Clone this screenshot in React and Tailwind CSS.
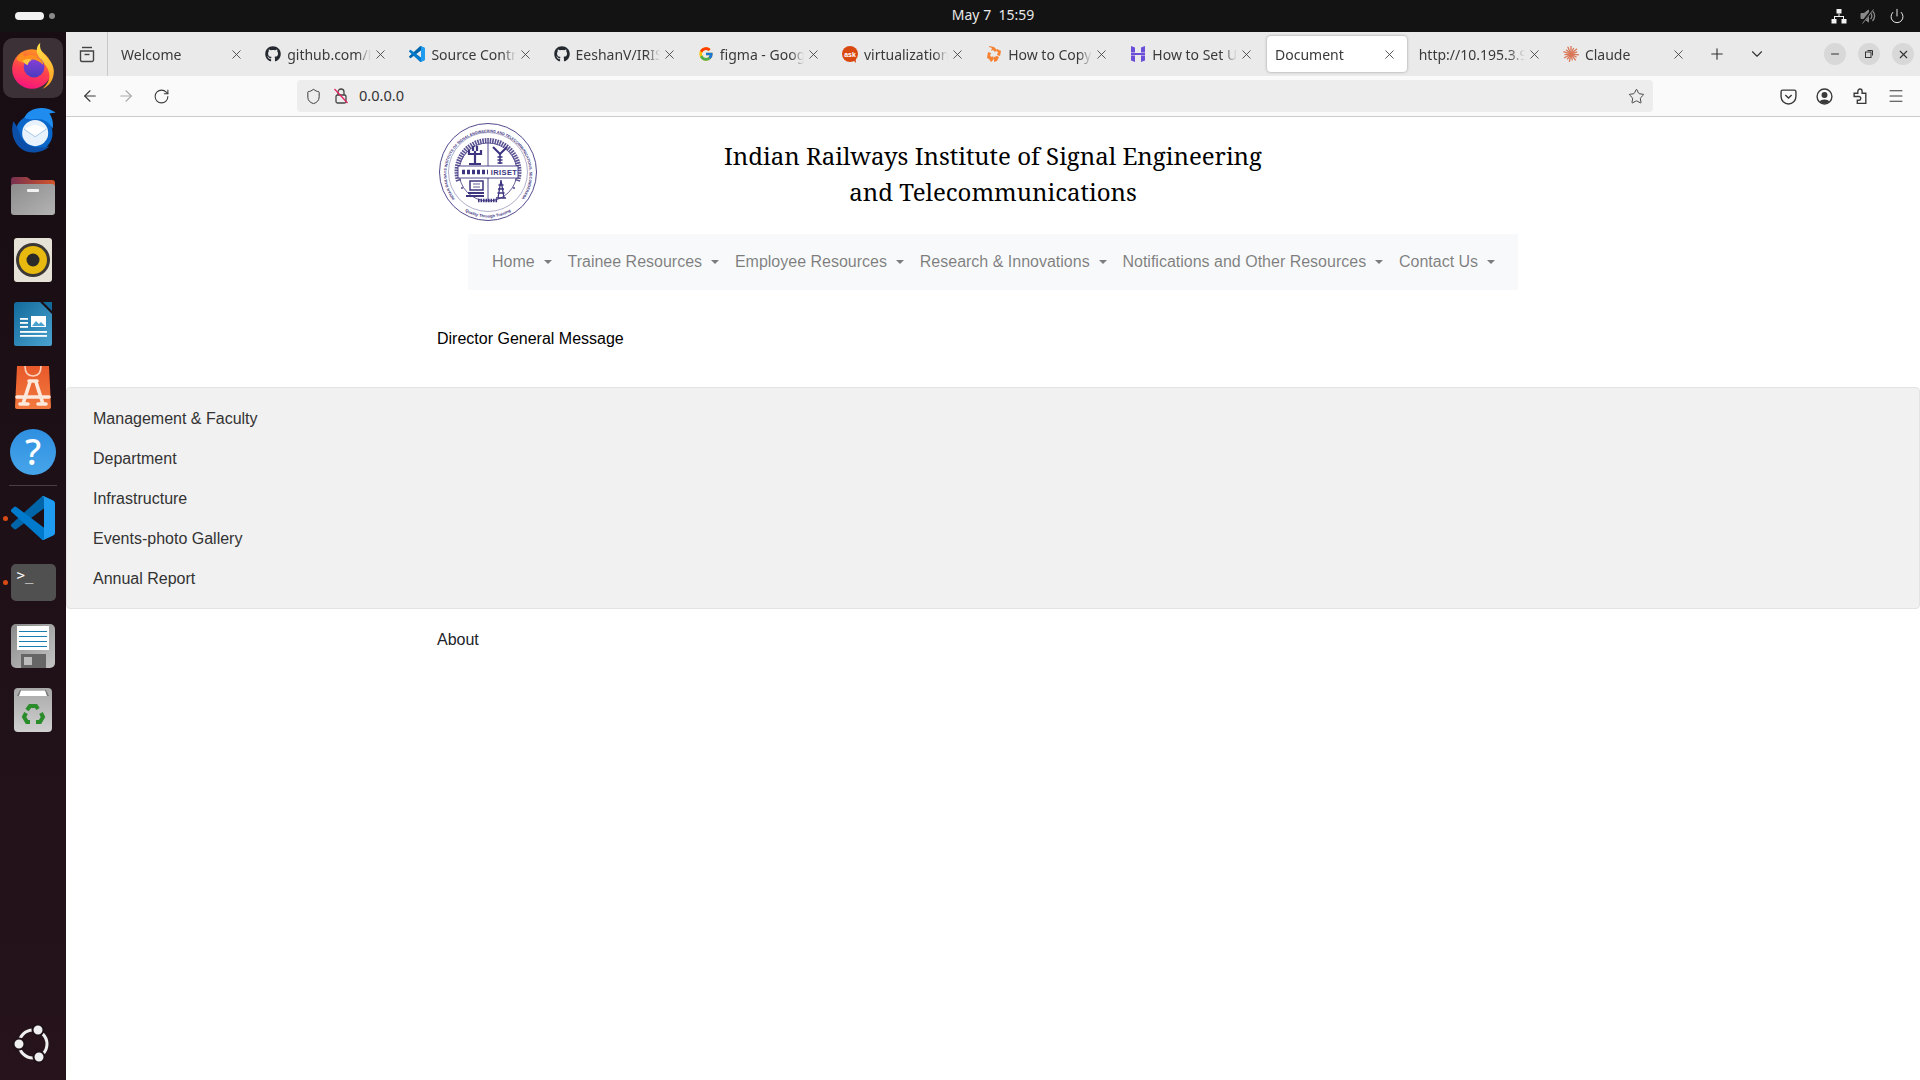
import { FaGithub } from 'react-icons/fa'
import { FcGoogle } from 'react-icons/fc'
import { ArrowLeft, ArrowRight, RotateCw, Shield, Star, Menu, X, Plus, ChevronDown, Minus, Power } from 'lucide-react'

const VS_PATHS = [
  ['#0065a9', 'M96.5 10.8 75.9.9a6.2 6.2 0 0 0-7.1 1.2L1.4 63.6a4.2 4.2 0 0 0 0 6.2l5.5 5a4.2 4.2 0 0 0 5.3.2L93.4 14.4a4.1 4.1 0 0 1 6.6 3.3v-.2a6.2 6.2 0 0 0-3.5-5.6z'],
  ['#007acc', 'M96.5 89.2 75.9 99.1a6.2 6.2 0 0 1-7.1-1.2L1.4 36.4a4.2 4.2 0 0 1 0-6.2l5.5-5a4.2 4.2 0 0 1 5.3-.2L93.4 85.6a4.1 4.1 0 0 0 6.6-3.3v.2a6.2 6.2 0 0 1-3.5 5.6z'],
  ['#1f9cf0', 'M75.9 99.1a6.2 6.2 0 0 1-7.1-1.2c2.3 2.3 6.2.7 6.2-2.6V4.7c0-3.3-3.9-4.9-6.2-2.6a6.2 6.2 0 0 1 7.1-1.2l20.6 9.9a6.2 6.2 0 0 1 3.5 5.6v67.2a6.2 6.2 0 0 1-3.5 5.6z'],
]

function VsCode({ size }) {
  return (
    <svg width={size} height={size} viewBox="0 0 100 100">
      {VS_PATHS.map(([fill, d]) => <path key={fill} fill={fill} d={d} />)}
    </svg>
  )
}

function AskIcon() {
  return (
    <svg width="16" height="17" viewBox="0 0 16 17">
      <circle cx="8" cy="8" r="8" fill="#d9480f" />
      <path d="M11 14l3 3-.5-5z" fill="#d9480f" />
      <text x="8" y="10.5" textAnchor="middle" fontSize="7" fontWeight="700" fill="#fff" fontFamily="Liberation Sans, sans-serif">ask</text>
    </svg>
  )
}

function CopyIcon() {
  return (
    <svg width="16" height="18" viewBox="0 0 16 18" fill="#f58233">
      <path d="M3 1l5 1 3 3-2 2-2-2-2 1 1-3-3-1z" />
      <path d="M11 4l4 2-1 5-3-1 1-3-2-1z" />
      <path d="M2 7l3 1-1 3 2 1 1-1 1 3-3 3-2-3-2-1z" />
      <path d="M8 12l3-1 2 1-2 4-3 1z" />
    </svg>
  )
}

function HostIcon() {
  return (
    <svg width="16" height="18" viewBox="0 0 16 18" fill="#6c4fd8">
      <path d="M1 1l4 1.5v5H1zM11 2.500L15 1v6.500h-4zM1 8h14v2H1zM1 10.500h4V17l-4-1.500zM11 10.500h4v5L11 17z" />
    </svg>
  )
}

function ClaudeIcon() {
  const rays = [0, 24, 48, 72, 96, 120, 144, 168, 192, 216, 240, 264, 288, 312, 336]
  return (
    <svg width="16" height="16" viewBox="0 0 16 16">
      {rays.map((r) => (
        <line key={r} x1="8" y1="8" x2="8" y2={r % 48 === 0 ? 0 : 1.5} stroke="#d97757" strokeWidth="1.3" transform={`rotate(${r} 8 8)`} />
      ))}
    </svg>
  )
}

const TABS = [
  { title: 'Welcome' },
  { title: 'github.com/EeshanV', icon: <FaGithub size={16} color="#24292f" /> },
  { title: 'Source Control', icon: <VsCode size={16} /> },
  { title: 'EeshanV/IRISET', icon: <FaGithub size={16} color="#24292f" /> },
  { title: 'figma - Google', icon: <FcGoogle size={16} /> },
  { title: 'virtualization', icon: <AskIcon /> },
  { title: 'How to Copy', icon: <CopyIcon /> },
  { title: 'How to Set Up', icon: <HostIcon /> },
  { title: 'Document', active: true },
  { title: 'http://10.195.3.9' },
  { title: 'Claude', icon: <ClaudeIcon /> },
]

const NAV_ITEMS = [
  'Home',
  'Trainee Resources',
  'Employee Resources',
  'Research & Innovations',
  'Notifications and Other Resources',
  'Contact Us',
]

const PANEL_ITEMS = ['Management & Faculty', 'Department', 'Infrastructure', 'Events-photo Gallery', 'Annual Report']

function Firefox() {
  return (
    <svg width="50" height="50" viewBox="0 2 48 48">
      <defs>
        <linearGradient id="ffBody" x1="0.7" y1="0" x2="0.4" y2="1">
          <stop offset="0" stopColor="#ff9a1f" />
          <stop offset="0.55" stopColor="#ff3f4e" />
          <stop offset="1" stopColor="#f5157f" />
        </linearGradient>
        <linearGradient id="ffFlame" x1="0.5" y1="0" x2="0.5" y2="1">
          <stop offset="0" stopColor="#ffe14a" />
          <stop offset="1" stopColor="#ff9a1f" />
        </linearGradient>
        <linearGradient id="ffCore" x1="0.5" y1="0" x2="0.5" y2="1">
          <stop offset="0" stopColor="#8f3fd6" />
          <stop offset="1" stopColor="#4a3bc0" />
        </linearGradient>
      </defs>
      <circle cx="23" cy="27" r="19" fill="url(#ffBody)" />
      <path d="M31 2c-1 5 1 8 5 12 5 5 8 10 8 15 0 8-4 14-11 17 6-5 8-11 6-17-2-7-9-11-11-17-1-4 0-8 3-10z" fill="url(#ffFlame)" />
      <circle cx="25" cy="25" r="10" fill="url(#ffCore)" />
      <path d="M8 17c2-4 5-6 7-6-1 2 0 3 1 4 4-2 9-2 13 1 3 2 5 4 5 7-4-4-9-6-13-5-2 1-3 2-3 3-3 0-8-1-10-4z" fill="#ff8f1f" />
      <path d="M14 19c3-2 7-2 9-1-2 1-4 3-4 5-2 0-4-2-5-4z" fill="#ffc53d" />
    </svg>
  )
}

function Thunderbird() {
  return (
    <svg width="50" height="50" viewBox="1 4 46 46">
      <circle cx="25" cy="28" r="17" fill="#0a66c8" />
      <path d="M6 17c-3 10 0 23 12 28 8 2 16 0 21-5-9 3-21 1-26-8-2-5-3-10-7-15z" fill="#0b4fa8" />
      <path d="M16 14c3-7 12-11 23-8l6 3-6 1c3 4 4 9 3 14-3-6-8-9-14-9-5 0-9 1-12-1z" fill="#1f8df0" />
      <circle cx="26" cy="28" r="12" fill="#e8f2fc" />
      <path d="M16 24l10 7 10-7" fill="none" stroke="#a8c8ea" strokeWidth="1.500" />
      <path d="M16 24l10-4 10 4-10 7z" fill="#ffffff" />
    </svg>
  )
}

function Files() {
  return (
    <svg width="46" height="46" viewBox="0 0 46 46">
      <defs>
        <linearGradient id="filesTab" x1="0" y1="0" x2="1" y2="0">
          <stop offset="0" stopColor="#77304f" />
          <stop offset="1" stopColor="#d4562a" />
        </linearGradient>
        <linearGradient id="filesBody" x1="0" y1="0" x2="1" y2="1">
          <stop offset="0" stopColor="#8c8c8c" />
          <stop offset="1" stopColor="#b4b4b4" />
        </linearGradient>
      </defs>
      <path d="M1 7a3 3 0 0 1 3-3h13l4 3h21a3 3 0 0 1 3 3v10H1z" fill="url(#filesTab)" />
      <rect x="1" y="11" width="44" height="31" rx="3" fill="url(#filesBody)" />
      <rect x="17" y="16" width="12" height="3" rx="1" fill="#f2f2f2" />
    </svg>
  )
}

function Rhythmbox() {
  return (
    <svg width="46" height="46" viewBox="0 0 46 46">
      <rect x="4" y="1" width="38" height="44" rx="3" fill="#e6e2d8" />
      <circle cx="23" cy="23" r="17" fill="#3b3836" />
      <circle cx="23" cy="23" r="14" fill="#e8b90f" />
      <circle cx="23" cy="23" r="6.500" fill="#2b2a28" />
    </svg>
  )
}

function Writer() {
  return (
    <svg width="46" height="46" viewBox="0 0 46 46">
      <defs>
        <linearGradient id="writerBody" x1="0" y1="0" x2="1" y2="1">
          <stop offset="0" stopColor="#126a9c" />
          <stop offset="1" stopColor="#4aa3cf" />
        </linearGradient>
      </defs>
      <path d="M7 1h23l12 12v30a2 2 0 0 1-2 2H6a2 2 0 0 1-2-2V4a3 3 0 0 1 3-3z" fill="url(#writerBody)" />
      <path d="M33 1h9v9z" fill="#126a9c" />
      <rect x="10" y="17" width="8" height="1.800" fill="#fff" />
      <rect x="10" y="21" width="8" height="1.800" fill="#fff" />
      <rect x="10" y="25" width="8" height="1.800" fill="#fff" />
      <rect x="21" y="15" width="15" height="11" fill="#fff" />
      <path d="M22 25l4-5 3 3 2-2 4 4z" fill="#4aa3cf" />
      <rect x="10" y="30" width="27" height="1.800" fill="#fff" />
      <rect x="10" y="34" width="27" height="1.800" fill="#fff" />
    </svg>
  )
}

function AppCenter() {
  return (
    <svg width="46" height="46" viewBox="0 0 46 46">
      <defs>
        <linearGradient id="appBody" x1="0" y1="0" x2="0" y2="1">
          <stop offset="0" stopColor="#e8592a" />
          <stop offset="1" stopColor="#f2793f" />
        </linearGradient>
      </defs>
      <path d="M7 1h32l2 41a2 2 0 0 1-2 2H7a2 2 0 0 1-2-2z" fill="url(#appBody)" />
      <path d="M15 1c0 8 4 10 8 10s8-2 8-10" fill="none" stroke="#fbd3bd" strokeWidth="1.600" />
      <path d="M19 16h8M20 17l-7 22M26 17l7 22M7 32h32M10 39h8M28 39h8" fill="none" stroke="#fde8dc" strokeWidth="3.600" strokeLinecap="round" />
    </svg>
  )
}

function Save() {
  return (
    <svg width="46" height="46" viewBox="0 0 46 46">
      <defs>
        <linearGradient id="saveBody" x1="0" y1="0" x2="1" y2="1">
          <stop offset="0" stopColor="#8a8a8a" />
          <stop offset="1" stopColor="#c4c4c4" />
        </linearGradient>
      </defs>
      <rect x="1" y="1" width="44" height="44" rx="5" fill="url(#saveBody)" />
      <rect x="7" y="3" width="32" height="24" fill="#fff" />
      <rect x="9" y="8" width="28" height="1" fill="#1a7fb0" />
      <rect x="9" y="13" width="28" height="1" fill="#1a7fb0" />
      <rect x="9" y="18" width="28" height="1" fill="#1a7fb0" />
      <rect x="9" y="23" width="28" height="1" fill="#1a7fb0" />
      <rect x="11" y="31" width="25" height="14" fill="#666" />
      <rect x="14" y="34" width="8" height="8" fill="#bdbdbd" />
    </svg>
  )
}

function Trash() {
  return (
    <svg width="46" height="46" viewBox="0 0 46 46">
      <defs>
        <linearGradient id="trashBody" x1="0" y1="0" x2="0" y2="1">
          <stop offset="0" stopColor="#a8a8a8" />
          <stop offset="1" stopColor="#d0d0d0" />
        </linearGradient>
      </defs>
      <rect x="4" y="1" width="38" height="44" rx="4" fill="url(#trashBody)" />
      <path d="M10 3h26l3 6H7z" fill="#777" />
      <path d="M11 3.500h24l2 5.500H9z" fill="#fff" />
      <g fill="none" stroke="#2a8c2a" strokeWidth="4">
        <path d="M17 23l3-4h6l2 3" />
        <path d="M31 26l2 4-3 5h-4" />
        <path d="M20 35h-3l-3-5 2-4" />
      </g>
    </svg>
  )
}

function Ubuntu() {
  return (
    <svg width="44" height="44" viewBox="0 0 44 44">
      <circle cx="22" cy="22" r="14" fill="none" stroke="#f0f0f0" strokeWidth="3" />
      <circle cx="27" cy="8" r="5.500" fill="#f0f0f0" stroke="#1f1118" strokeWidth="2" />
      <circle cx="8" cy="22" r="5.500" fill="#f0f0f0" stroke="#1f1118" strokeWidth="2" />
      <circle cx="28" cy="35" r="5.500" fill="#f0f0f0" stroke="#1f1118" strokeWidth="2" />
    </svg>
  )
}

function Help() {
  return (
    <div className="w-[46px] h-[46px] rounded-full bg-gradient-to-b from-[#2f8fe0] to-[#47a5ea] flex items-center justify-center text-white text-[36px] font-medium leading-none font-['Noto_Sans',sans-serif]">
      ?
    </div>
  )
}

function Terminal() {
  return (
    <div className="w-[45px] h-[37px] rounded-[5px] bg-[#505050] text-white text-[14px] leading-none pl-[6px] pt-[4px] font-['DejaVu_Sans_Mono',monospace]">
      &gt;_
    </div>
  )
}

function Logo() {
  const blue = '#3d3580'
  return (
    <svg width="100" height="100" viewBox="0 0 100 100" className="shrink-0">
      <defs>
        <path id="topRing" d="M17 77A41.500 41.500 0 1 1 83 77" />
        <path id="bottomRing" d="M22 86A46 46 0 0 0 78 86" />
      </defs>
      <circle cx="50" cy="50" r="48.500" fill="none" stroke={blue} strokeWidth="0.900" />
      <circle cx="50" cy="50" r="39.500" fill="none" stroke={blue} strokeWidth="0.400" />
      <circle cx="50" cy="50" r="29" fill="none" stroke={blue} strokeWidth="0.800" />
      <text fontSize="3.800" fill={blue} fontFamily="Liberation Sans, sans-serif" fontWeight="700">
        <textPath href="#topRing" textLength="186" lengthAdjust="spacingAndGlyphs">INDIAN RAILWAYS INSTITUTE OF SIGNAL ENGINEERING AND TELECOMMUNICATIONS, SECUNDERABAD</textPath>
      </text>
      <text fontSize="4" fill={blue} fontFamily="Liberation Sans, sans-serif" fontWeight="700">
        <textPath href="#bottomRing" startOffset="50%" textAnchor="middle">Quality Through Training</textPath>
      </text>
      {/* the hindi ring reads as dense marks at this size */}
      <path d="M20.500 59A31 31 0 1 1 79.500 59" fill="none" stroke={blue} strokeWidth="5" strokeDasharray="1.600 0.900" opacity="0.85" />
      <path d="M40 78.500h20" stroke={blue} strokeWidth="3.500" strokeDasharray="1.600 0.900" />
      <circle cx="24" cy="66" r="0.900" fill={blue} />
      <circle cx="76" cy="66" r="0.900" fill={blue} />
      <path d="M50 21v23M50 56v23" stroke={blue} strokeWidth="0.900" />
      <rect x="20" y="44" width="60" height="12" fill="#fff" stroke={blue} strokeWidth="0.900" />
      <path d="M24 50h26" stroke={blue} strokeWidth="4.500" strokeDasharray="3 2" />
      <text x="66" y="52.800" textAnchor="middle" fontSize="7.500" fontWeight="700" letterSpacing="0.400" fill={blue} fontFamily="Liberation Sans, sans-serif">IRISET</text>
      <path d="M37 29v13M31 42h12M31 28v4h12v-4M35 24v5M39 24v5" fill="none" stroke={blue} strokeWidth="2.200" />
      <path d="M55 25l7 7 7-7" fill="none" stroke={blue} strokeWidth="2" />
      <path d="M62 32v10M59.500 35h5M59.500 38h5M59.500 41h5" fill="none" stroke={blue} strokeWidth="1.500" />
      <rect x="32" y="59" width="13" height="9" fill="none" stroke={blue} strokeWidth="1.500" />
      <path d="M35 62h7M35 65h7" stroke={blue} strokeWidth="0.800" />
      <path d="M30 71h16M28 74h18" stroke={blue} strokeWidth="1.800" />
      <path d="M63 58l-3 18M63 58l3 18M60.500 63h5M60 67h6M59.500 71h7M58 76h10" fill="none" stroke={blue} strokeWidth="1.300" />
    </svg>
  )
}

function DockItem({ children, running, active }) {
  return (
    <div className="relative h-[64px] w-full flex items-center justify-center">
      {running && <span className="absolute left-[3px] top-[30px] w-[5px] h-[5px] rounded-full bg-[#d84a14]" />}
      {active && <span className="absolute left-[3px] top-[2px] w-[60px] h-[60px] rounded-[10px] bg-[#3b3136]" />}
      <span className="relative">{children}</span>
    </div>
  )
}

function Dock() {
  return (
    <aside className="w-[66px] shrink-0 bg-gradient-to-b from-[#170d13] to-[#26131c] flex flex-col pt-[4px] pb-[4px]">
      <DockItem running active><Firefox /></DockItem>
      <DockItem><Thunderbird /></DockItem>
      <DockItem><Files /></DockItem>
      <DockItem><Rhythmbox /></DockItem>
      <DockItem><Writer /></DockItem>
      <DockItem><AppCenter /></DockItem>
      <DockItem><Help /></DockItem>
      <div className="h-px bg-[#4a3f46] mx-[9px] mt-[1px]" />
      <DockItem running><VsCode size={44} /></DockItem>
      <DockItem running><Terminal /></DockItem>
      <DockItem><Save /></DockItem>
      <DockItem><Trash /></DockItem>
      <div className="mt-auto"><DockItem><Ubuntu /></DockItem></div>
    </aside>
  )
}

function Tab({ title, icon, active }) {
  return (
    <div className={`h-[36px] shrink-0 flex items-center pr-[10px] gap-[6px] rounded-[4px] ${active ? 'w-[140.2px] ml-[3.500px] mr-[0.500px] bg-white shadow-[0_0_3px_rgba(0,0,0,0.35)] pl-[8px]' : 'w-[144.2px] pl-[11px]'}`}>
      {icon && <span className="w-[16px] h-[18px] shrink-0 flex items-center justify-center">{icon}</span>}
      <span className="flex-1 min-w-0 overflow-hidden whitespace-nowrap text-[14px] text-[#3a3a3a] [mask-image:linear-gradient(to_right,black_84%,transparent)]">
        {title}
      </span>
      <X size={15} strokeWidth={1.4} className="shrink-0 text-[#444] -ml-[4px]" />
    </div>
  )
}

function TabBar() {
  return (
    <div className="h-[44px] bg-[#eaeaea] flex items-center">
      <div className="w-[42px] h-full shrink-0 flex items-center justify-center border-r border-[#c8c8c8] mr-[2px]">
        <svg width="18" height="18" viewBox="0 0 18 18" fill="none" stroke="#444" strokeWidth="1.400">
          <path d="M4 2.500h10" />
          <path d="M2.500 6h13v9a1.500 1.500 0 0 1-1.500 1.500H4A1.500 1.500 0 0 1 2.500 15z" />
          <path d="M6.500 9.500h5" />
        </svg>
      </div>
      <div className="flex items-center">
        {TABS.map((t) => <Tab key={t.title} {...t} />)}
      </div>
      <Plus size={18} strokeWidth={1.500} className="ml-[12px] text-[#333]" />
      <ChevronDown size={18} strokeWidth={1.500} className="ml-[22px] text-[#333]" />
      <div className="ml-auto flex items-center gap-[12px] pr-[6px]">
        <span className="w-[22px] h-[22px] rounded-full bg-[#d8d8d8] flex items-center justify-center"><Minus size={12} className="text-[#333]" /></span>
        <span className="w-[22px] h-[22px] rounded-full bg-[#d8d8d8] flex items-center justify-center">
          <svg width="10" height="10" viewBox="0 0 10 10" fill="none" stroke="#333">
            <rect x="1.500" y="3" width="5.500" height="5.500" />
            <path d="M3.500 1.500h5v5" />
          </svg>
        </span>
        <span className="w-[22px] h-[22px] rounded-full bg-[#d8d8d8] flex items-center justify-center"><X size={13} strokeWidth={2} className="text-[#333]" /></span>
      </div>
    </div>
  )
}

function ToolBar() {
  return (
    <div className="h-[41px] bg-[#fafafa] border-b border-[#cccccc] flex items-center text-[#3a3a3a]">
      <ArrowLeft size={18} strokeWidth={1.500} className="ml-[15px]" />
      <ArrowRight size={18} strokeWidth={1.500} className="ml-[18px] text-[#aaaaaa]" />
      <RotateCw size={17} strokeWidth={1.500} className="ml-[18px]" />
      <div className="ml-[127px] w-[1356px] h-[32px] rounded-[4px] bg-[#ededed] flex items-center">
        <Shield size={17} strokeWidth={1.400} className="ml-[8px]" />
        <span className="relative ml-[12px] w-[14px] h-[16px]">
          <svg width="14" height="16" viewBox="0 0 14 16" fill="none" stroke="#444" strokeWidth="1.300">
            <rect x="2" y="7" width="10" height="8" rx="1.500" />
            <path d="M4 7V4a3 3 0 0 1 6 0v3" />
            <path d="M0.500 1l13 14" stroke="#e0245e" />
          </svg>
        </span>
        <span className="ml-[11px] text-[14.600px] text-[#333]">0.0.0.0</span>
        <Star size={17} strokeWidth={1.300} className="ml-auto mr-[8px]" />
      </div>
      <div className="ml-auto flex items-center gap-[19px] pr-[16px]">
        <svg width="17" height="17" viewBox="0 0 16 16" fill="none" stroke="#3a3a3a" strokeWidth="1.300">
          <path d="M2.500 2h11A1.500 1.500 0 0 1 15 3.500V8a7 7 0 0 1-14 0V3.500A1.500 1.500 0 0 1 2.500 2z" />
          <path d="M5 6.500l3 3 3-3" />
        </svg>
        <svg width="17" height="17" viewBox="0 0 16 16">
          <circle cx="8" cy="8" r="7" fill="none" stroke="#3a3a3a" strokeWidth="1.300" />
          <circle cx="8" cy="6.500" r="2.800" fill="#3a3a3a" />
          <path d="M3.500 13c1-3 8-3 9 0a7 7 0 0 1-9 0z" fill="#3a3a3a" />
        </svg>
        <svg width="17" height="17" viewBox="0 0 16 16" fill="none" stroke="#3a3a3a" strokeWidth="1.300">
          <path d="M2 5h3.500V3a2 2 0 0 1 4 0v2H13v9.500H5v-3H6.500a1.700 1.700 0 0 0 0-3.500H2z" />
        </svg>
        <Menu size={18} strokeWidth={1.400} className="-ml-[1px] mr-[-1px]" />
      </div>
    </div>
  )
}

function TopBar() {
  return (
    <div className="h-[32px] shrink-0 bg-[#131313] grid grid-cols-[1fr_auto_1fr] items-center text-[#e8e8e8] font-['Noto_Sans',sans-serif]">
      <div className="flex items-center pl-[15px] gap-[5px]">
        <span className="w-[29px] h-[8px] rounded-full bg-[#f2f2f2]" />
        <span className="w-[6px] h-[6px] rounded-full bg-[#8a8a8a]" />
      </div>
      <div className="text-[14px] leading-[20px] whitespace-pre ml-[66px] -mt-[2px]">May 7  15:59</div>
      <div className="flex items-center justify-end gap-[13px] pr-[15px]">
        <svg width="16" height="16" viewBox="0 0 16 16" fill="#f2f2f2">
          <rect x="5.500" y="1" width="5" height="4.500" />
          <rect x="0.500" y="11" width="5" height="4.500" />
          <rect x="10.500" y="11" width="5" height="4.500" />
          <path d="M7.500 5.500h1V8H13v3h-1V9H4v2H3V8h4.500z" />
        </svg>
        <svg width="16" height="16" viewBox="0 0 16 16" fill="none" stroke="#8a8a8a">
          <path d="M1 5.500h3L8.500 2v12L4 10.500H1z" fill="#8a8a8a" />
          <path d="M10.500 5a4 4 0 0 1 0 6M12.500 3a7 7 0 0 1 0 10" strokeWidth="1.300" />
          <path d="M2 15L13 1" stroke="#131313" strokeWidth="2.500" />
          <path d="M2.500 15.500L13.500 1.500" strokeWidth="1" />
        </svg>
        <Power size={16} strokeWidth={1.500} />
      </div>
    </div>
  )
}

function Page() {
  return (
    <main className="flex-1 bg-white font-['Liberation_Sans',Arial,sans-serif] text-[16px] leading-[24px]">
      <div className="w-[1110px] mx-auto">
        <header className="grid grid-cols-[100px_1fr_100px] items-center pt-[5px]">
          <Logo />
          <h1 className="text-center text-[24px] leading-[36px] font-normal text-black font-['Noto_Serif','DejaVu_Serif',serif] mt-[4px]">
            Indian Railways Institute of Signal Engineering<br />and Telecommunications
          </h1>
          <div />
        </header>
        <nav className="mt-[12px] mx-auto w-[1050px] h-[56px] bg-[#f8f9fa] flex items-center px-[16px]">
          {NAV_ITEMS.map((item) => (
            <a key={item} className="flex items-center px-[8px] whitespace-nowrap text-[rgba(0,0,0,0.5)]">
              {item}
              <span className="ml-[9px] mr-[-0.200px] w-0 h-0 border-x-[4.800px] border-x-transparent border-t-[4.800px] border-t-[rgba(0,0,0,0.5)]" />
            </a>
          ))}
        </nav>
        <p className="mt-[37px] text-black -ml-[1px]">Director General Message</p>
      </div>
      <section className="mt-[36px] h-[222px] bg-[#f1f1f1] border border-[#e3e3e3] rounded-[4px] pl-[26px] pt-[11px] flex flex-col text-[#333]">
        {PANEL_ITEMS.map((item) => (
          <a key={item} className="h-[40px] flex items-center">{item}</a>
        ))}
      </section>
      <div className="w-[1110px] mx-auto mt-[19px]">
        <p className="text-[#212529] -ml-[1px]">About</p>
      </div>
    </main>
  )
}

export default function App() {
  return (
    <div className="w-[1920px] h-[1080px] flex flex-col overflow-hidden font-['Noto_Sans',sans-serif]">
      <TopBar />
      <div className="flex flex-1 min-h-0">
        <Dock />
        <div className="flex-1 flex flex-col min-w-0">
          <TabBar />
          <ToolBar />
          <Page />
        </div>
      </div>
    </div>
  )
}
